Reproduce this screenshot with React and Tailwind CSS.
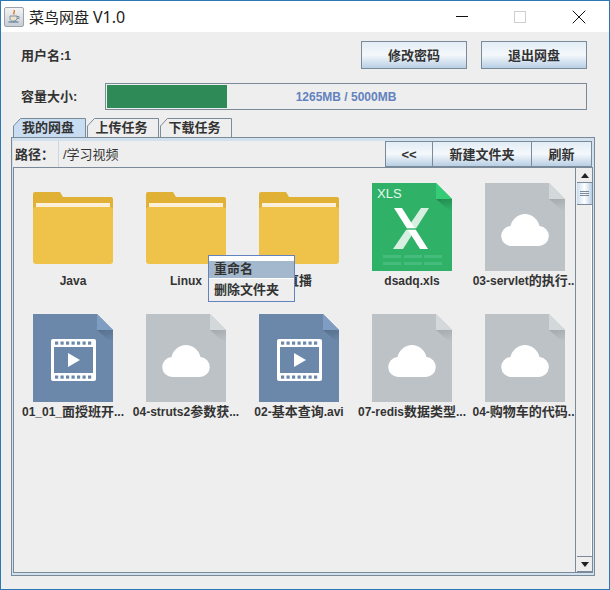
import React from "react";
import { X } from "lucide-react";

const latin = "font-['Liberation_Sans','Noto_Sans_CJK_SC',sans-serif]";
const btn = "flex items-center justify-center border border-[#7a8a99] bg-gradient-to-b from-[#e3edf6] via-[#f4f8fb] to-[#b8cfe5] pt-[2px] text-[13px] font-bold text-[#333]";

const files = [
  { type: "folder", name: [["Java"]] },
  { type: "folder", name: [["Linux"]] },
  { type: "folder", name: [["", "直播"]] },
  { type: "xls", name: [["dsadq.xls"]] },
  { type: "cloud", clipped: true, name: [["03-servlet"], ["", "的执行"], [".."]] },
  { type: "video", name: [["01_01_"], ["", "面授班开"], ["..."]] },
  { type: "cloud", name: [["04-struts2"], ["", "参数获"], ["..."]] },
  { type: "video", name: [["02-"], ["", "基本查询"], [".avi"]] },
  { type: "cloud", name: [["07-redis"], ["", "数据类型"], ["..."]] },
  { type: "cloud", clipped: true, name: [["04-"], ["", "购物车的代码"], [".."]] },
];

const Fold = ({ light, shade, id }) => (
  <>
    <defs>
      <linearGradient id={id} x1="0" y1="0" x2="0.3" y2="1">
        <stop offset="0" stopColor={shade} />
        <stop offset="1" stopColor={shade} stopOpacity="0" />
      </linearGradient>
    </defs>
    <polygon points="64,16 80,16 80,30" fill={`url(#${id})`} />
    <polygon points="64,0 80,16 64,16" fill={light} />
  </>
);

const Cloud = () => (
  <svg width="80" height="88" viewBox="0 0 80 88">
    <polygon points="0,0 64,0 80,16 80,88 0,88" fill="#bdc2c6" />
    <Fold light="#d3d8da" shade="#a4a9ad" id="cloudFold" />
    <path d="M27 63a10 10 0 0 1-1.500-20C27 36 33 31 40 31s13 5 14.500 12A10 10 0 0 1 53 63Z" fill="#fff" />
  </svg>
);

const Video = () => (
  <svg width="80" height="88" viewBox="0 0 80 88">
    <polygon points="0,0 64,0 80,16 80,88 0,88" fill="#6b88aa" />
    <Fold light="#7f9dc2" shade="#566f8c" id="videoFold" />
    <rect x="18" y="25" width="45" height="42" rx="2" fill="#fff" />
    <rect x="21" y="33" width="39" height="26" fill="#6b88aa" />
    {[0, 1, 2, 3, 4, 5, 6].map((i) => (
      <g key={i} fill="#6b88aa">
        <rect x={22 + i * 5.5} y="27.5" width="3.2" height="3.2" />
        <rect x={22 + i * 5.5} y="61.5" width="3.2" height="3.2" />
      </g>
    ))}
    <polygon points="35,39 47,46 35,53" fill="#fff" />
  </svg>
);

const Xls = () => (
  <svg width="80" height="88" viewBox="0 0 80 88">
    <polygon points="0,0 64,0 80,16 80,88 0,88" fill="#2fb268" />
    <Fold light="#35cc78" shade="#22884e" id="xlsFold" />
    <text x="5" y="15" fontSize="13" fill="#e8f7ee" fontFamily="Liberation Sans, sans-serif">XLS</text>
    <polygon points="49,25 57,25 31,66 21,66" fill="#d6efe0" />
    <polygon points="22,25 30,25 56,66 48,66" fill="#fff" />
    <polygon points="32,45 46,45 45,47 33,47" fill="#2fb268" opacity="0.7" />
    {[72, 79].map((y) =>
      [11, 32, 52].map((x) => <rect key={x + "-" + y} x={x} y={y} width="18" height="3" fill="#45bc7b" />)
    )}
  </svg>
);

const Folder = () => (
  <svg width="80" height="72" viewBox="0 0 80 72">
    <path d="M2 0H27L30 5H78a2 2 0 0 1 2 2V40H0V2a2 2 0 0 1 2-2Z" fill="#e0b135" />
    <rect x="3" y="11" width="74" height="6" fill="#fdf0d8" />
    <rect x="0" y="15" width="80" height="57" rx="3" fill="#efc24a" />
  </svg>
);

const icons = { folder: Folder, xls: Xls, cloud: Cloud, video: Video };

const FileCell = ({ file }) => {
  const Icon = icons[file.type];
  return (
    <div className="flex h-[131px] w-[113px] flex-col items-center">
      <div className="flex h-[88px] items-end pb-[7px] data-[full=true]:pb-0" data-full={file.type !== "folder"}>
        <Icon />
      </div>
      <div className={`flex h-[20px] items-center whitespace-nowrap pl-px text-[12px] font-bold text-[#333] ${latin} ${file.clipped ? "mr-[3px]" : ""}`}>
        {file.name.map((part, i) =>
          part.length > 1 ? (
            <span key={i} className="text-[13px]">{part[1]}</span>
          ) : (
            <span key={i}>{part[0]}</span>
          )
        )}
      </div>
    </div>
  );
};

const Tab = ({ label, active, width }) => (
  <div className={`relative flex h-[20px] items-center justify-center pr-[3px] text-[13px] font-bold text-[#333] ${width}`}>
    <svg className="absolute inset-0 h-full w-full" preserveAspectRatio="none" viewBox="0 0 73 20">
      <path d="M0.5 20V8L7.5 0.5H72.5V20" fill={active ? "#c8ddf2" : "#eeeeee"} stroke="#7a8a99" />
    </svg>
    <span className="relative">{label}</span>
  </div>
);

const App = () => {
  return (
    <div className={`flex h-[590px] w-[610px] flex-col overflow-hidden border border-[#2a78b4] bg-[#eeeeee] ${latin}`}>
      {/* title bar */}
      <div className="flex h-[31px] shrink-0 items-center bg-white pl-[3px] pr-[18px]">
        <div className="flex h-[20px] w-[20px] items-center justify-center rounded-[2px] border border-[#9aa3ad] bg-gradient-to-b from-[#f4f4f4] to-[#c9ced4]">
          <svg width="14" height="15" viewBox="0 0 14 15">
            <path d="M7 1c1.500 1.500-1.500 2.500 0 4.500C6 3.800 8.500 3 7 1Z" fill="#d9782c" stroke="#d9782c" />
            <path d="M3 7h7v2.500a3 3 0 0 1-3 2.500 3 3 0 0 1-4-2.500Z" fill="#e9e2cf" stroke="#6f7f92" strokeWidth="0.8" />
            <path d="M10 7.500h2v2h-2" fill="none" stroke="#6f7f92" strokeWidth="0.8" />
            <path d="M1.500 13h10" stroke="#5b7d9e" strokeWidth="1.200" />
          </svg>
        </div>
        <div className="ml-[5px] flex-1 font-['Noto_Sans','Noto_Sans_CJK_SC',sans-serif] text-[15px] text-[#222]">菜鸟网盘 <span className="text-[16px]">V1.0</span></div>
        <div className="flex items-center">
          <div className="h-px w-[12px] bg-[#111]" />
          <div className="ml-[46px] h-[12px] w-[12px] border border-[#cfcfcf]" />
          <X className="ml-[41px]" size={24} strokeWidth={1} color="#111" />
        </div>
      </div>

      {/* user row */}
      <div className="mt-[9px] flex h-[28px] items-center pl-[20px] pr-[22px] text-[13px] font-bold text-[#333]">
        <div className="flex-1 pt-px">用户名:<span className="text-[12px]">1</span></div>
        <div className="flex gap-[14px]">
          <div className={`${btn} h-[28px] w-[106px]`}>修改密码</div>
          <div className={`${btn} h-[28px] w-[106px]`}>退出网盘</div>
        </div>
      </div>

      {/* capacity row */}
      <div className="mt-[14px] flex h-[27px] items-center pl-[20px] pr-[22px] text-[13px] font-bold text-[#333]">
        <div className="w-[84px]">容量大小:</div>
        <div className="relative flex h-[27px] flex-1 items-center justify-center border border-[#7a8a99] bg-[#eeeeee]">
          <div className="absolute bottom-px left-px top-px w-[120px] bg-[#2e8b57]" />
          <span className="relative text-[12px] text-[#6382bf]">1265MB / 5000MB</span>
        </div>
      </div>

      {/* tabs */}
      <div className="ml-[12px] mt-[8px] flex h-[19px] gap-px overflow-visible">
        <Tab label="我的网盘" active width="w-[73px]" />
        <Tab label="上传任务" width="w-[72px]" />
        <Tab label="下载任务" width="w-[72px]" />
      </div>

      {/* tab panel */}
      <div className="relative ml-[10px] flex h-[439px] w-[584px] flex-col border border-[#7a8a99] bg-[#d3e1ef] pb-[2px] pl-px pr-[2px] pt-[3px]">
        <div className="flex h-[26px] items-stretch bg-[#eeeeee]">
          <div className="flex w-[45px] items-center pl-[2px] pt-px text-[13px] font-bold text-[#333]">路径：</div>
          <div className="flex flex-1 items-center border-l border-[#c8d6e5] pl-[4px] pt-px text-[13px] text-[#333]">/学习视频</div>
          <div className={`${btn} w-[48px]`}>&lt;&lt;</div>
          <div className={`${btn} w-[99px] border-l-0`}>新建文件夹</div>
          <div className={`${btn} w-[60px] border-l-0`}>刷新</div>
        </div>

        <div className="-mr-px flex min-h-0 flex-1 border border-[#7a8a99] bg-[#eeeeee]">
          <div className="relative flex-1 overflow-hidden pl-[3px] pt-[15px]">
            <div className="-ml-px grid grid-cols-[repeat(5,113px)]">
              {files.map((f, i) => (
                <FileCell key={i} file={f} />
              ))}
            </div>

            {/* context menu */}
            <div className="absolute left-[194px] top-[87px] flex h-[47px] w-[87px] flex-col border border-[#6382bf] bg-[#eeeeee] text-[13px] font-bold text-[#333]">
              <div className="h-[5px] bg-white" />
              <div className="flex h-[17px] items-center bg-[#a3b8cc] pb-px pl-[5px]">重命名</div>
              <div className="h-px bg-white" />
              <div className="flex flex-1 items-center pl-[5px]">删除文件夹</div>
            </div>
          </div>

          {/* scrollbar */}
          <div className="flex w-[17px] flex-col border-l border-[#7a8a99] bg-[#eeeeee] pl-px">
            <div className="flex h-[15px] items-center justify-center border-b border-[#7a8a99]">
              <div className="h-0 w-0 border-x-[4px] border-b-[5px] border-x-transparent border-b-[#222]" />
            </div>
            <div className="flex h-[22px] flex-col items-center justify-center gap-px border-b border-[#7a8a99] bg-gradient-to-r from-[#c8ddf2] via-white to-[#b8cfe5]">
              <div className="h-px w-[9px] bg-[#7a8a99]" />
              <div className="h-px w-[9px] bg-[#7a8a99]" />
              <div className="h-px w-[9px] bg-[#7a8a99]" />
            </div>
            <div className="flex-1 border-r border-white" />
            <div className="flex h-[16px] items-center justify-center border-y border-[#7a8a99]">
              <div className="h-0 w-0 border-x-[4px] border-t-[5px] border-x-transparent border-t-[#222]" />
            </div>
          </div>
        </div>
      </div>
    </div>
  );
};

export default App;
